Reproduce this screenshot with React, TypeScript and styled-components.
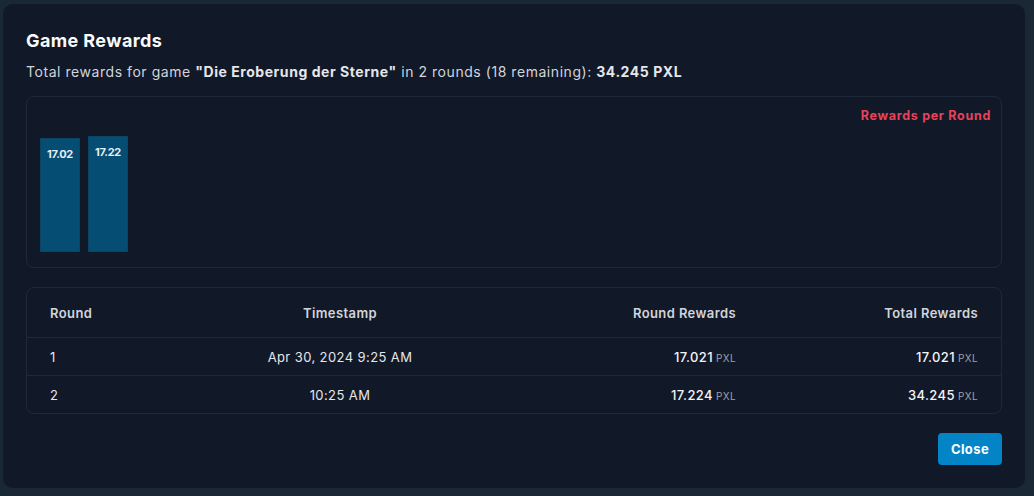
import React from 'react';
import styled, { createGlobalStyle } from 'styled-components';

const GlobalStyle = createGlobalStyle`
  html, body {
    margin: 0;
    padding: 0;
    background: #1a2734;
    font-family: 'Inter', 'Noto Sans', sans-serif;
  }
`;

const Backdrop = styled.div`
  width: 1034px;
  height: 496px;
  padding: 4px 9px 8px 3px;
  box-sizing: border-box;
  background: #1a2734;
`;

const Modal = styled.div`
  height: 100%;
  box-sizing: border-box;
  background: #111827;
  border-radius: 10px;
  padding: 26px 23px 23px 23px;
  display: flex;
  flex-direction: column;
  letter-spacing: 0.4px;

  & > * {
    flex-shrink: 0;
  }
`;

const Title = styled.h2`
  margin: 0;
  font-size: 18px;
  font-weight: 700;
  color: #f9fafb;
  line-height: 22px;
`;

const Subtitle = styled.p`
  margin: 11px 0 0;
  font-size: 14px;
  color: #d1d5db;
  line-height: 18px;
  letter-spacing: 0.55px;

  b {
    font-weight: 700;
    color: #e5e7eb;
  }
`;

const ChartBox = styled.div`
  margin-top: 15px;
  height: 172px;
  box-sizing: border-box;
  border: 1px solid #1f2a38;
  border-radius: 8px;
  padding: 11px 10px 15px 13px;
  display: flex;
  flex-direction: column;
`;

const ChartLabel = styled.div`
  align-self: flex-end;
  font-size: 12.5px;
  font-weight: 700;
  color: #e8435a;
  line-height: 16px;
  letter-spacing: 0.7px;
`;

const Bars = styled.div`
  flex: 1;
  display: flex;
  align-items: flex-end;
  gap: 8px;
`;

const Bar = styled.div<{ $h: number }>`
  width: 40px;
  height: ${p => p.$h}px;
  background: #064d73;
  box-shadow: inset 0 0 0 1px #0a4566;
  color: #e5eef5;
  font-size: 11px;
  font-weight: 700;
  text-align: center;
  padding-top: 9px;
  box-sizing: border-box;
  letter-spacing: -0.3px;
`;

const TableBox = styled.div`
  margin-top: 19px;
  border: 1px solid #1f2a38;
  border-radius: 8px;
`;

const Row = styled.div<{ $head?: boolean }>`
  display: grid;
  grid-template-columns: 150px 280px 256px 1fr;
  padding: 0 23px;
  height: ${p => (p.$head ? 49 : 37)}px;
  align-items: center;
  font-size: 13px;
  font-weight: ${p => (p.$head ? 600 : 400)};
  color: ${p => (p.$head ? '#d1d5db' : '#e5e7eb')};
  & + & {
    border-top: 1px solid #1f2a38;
  }
`;

const Cell = styled.div<{ $align?: 'left' | 'center' | 'right' }>`
  text-align: ${p => p.$align || 'left'};
`;

const Amount = styled.span`
  font-weight: 500;
  color: #f3f4f6;
`;

const Unit = styled.span`
  font-size: 10px;
  color: #9ca3af;
  margin-left: 3px;
`;

const Footer = styled.div`
  margin-top: 19px;
  display: flex;
  justify-content: flex-end;
`;

const CloseButton = styled.button`
  width: 64px;
  height: 32px;
  border: none;
  border-radius: 4px;
  background: #0284c7;
  color: #ffffff;
  font-family: inherit;
  font-size: 13px;
  font-weight: 700;
  letter-spacing: 0.4px;
  cursor: pointer;
`;

const rounds = [
  { round: 1, time: 'Apr 30, 2024 9:25 AM', reward: '17.021', total: '17.021', label: '17.02', h: 114 },
  { round: 2, time: '10:25 AM', reward: '17.224', total: '34.245', label: '17.22', h: 116 },
];

export default function App() {
  return (
    <>
      <GlobalStyle />
      <Backdrop>
        <Modal>
          <Title>Game Rewards</Title>
          <Subtitle>
            Total rewards for game <b>"Die Eroberung der Sterne"</b> in 2 rounds (18 remaining): <b>34.245 PXL</b>
          </Subtitle>

          <ChartBox>
            <ChartLabel>Rewards per Round</ChartLabel>
            <Bars>
              {rounds.map(r => (
                <Bar key={r.round} $h={r.h}>{r.label}</Bar>
              ))}
            </Bars>
          </ChartBox>

          <TableBox>
            <Row $head>
              <Cell>Round</Cell>
              <Cell $align="center">Timestamp</Cell>
              <Cell $align="right">Round Rewards</Cell>
              <Cell $align="right">Total Rewards</Cell>
            </Row>
            {rounds.map(r => (
              <Row key={r.round}>
                <Cell>{r.round}</Cell>
                <Cell $align="center">{r.time}</Cell>
                <Cell $align="right"><Amount>{r.reward}</Amount><Unit>PXL</Unit></Cell>
                <Cell $align="right"><Amount>{r.total}</Amount><Unit>PXL</Unit></Cell>
              </Row>
            ))}
          </TableBox>

          <Footer>
            <CloseButton>Close</CloseButton>
          </Footer>
        </Modal>
      </Backdrop>
    </>
  );
}
